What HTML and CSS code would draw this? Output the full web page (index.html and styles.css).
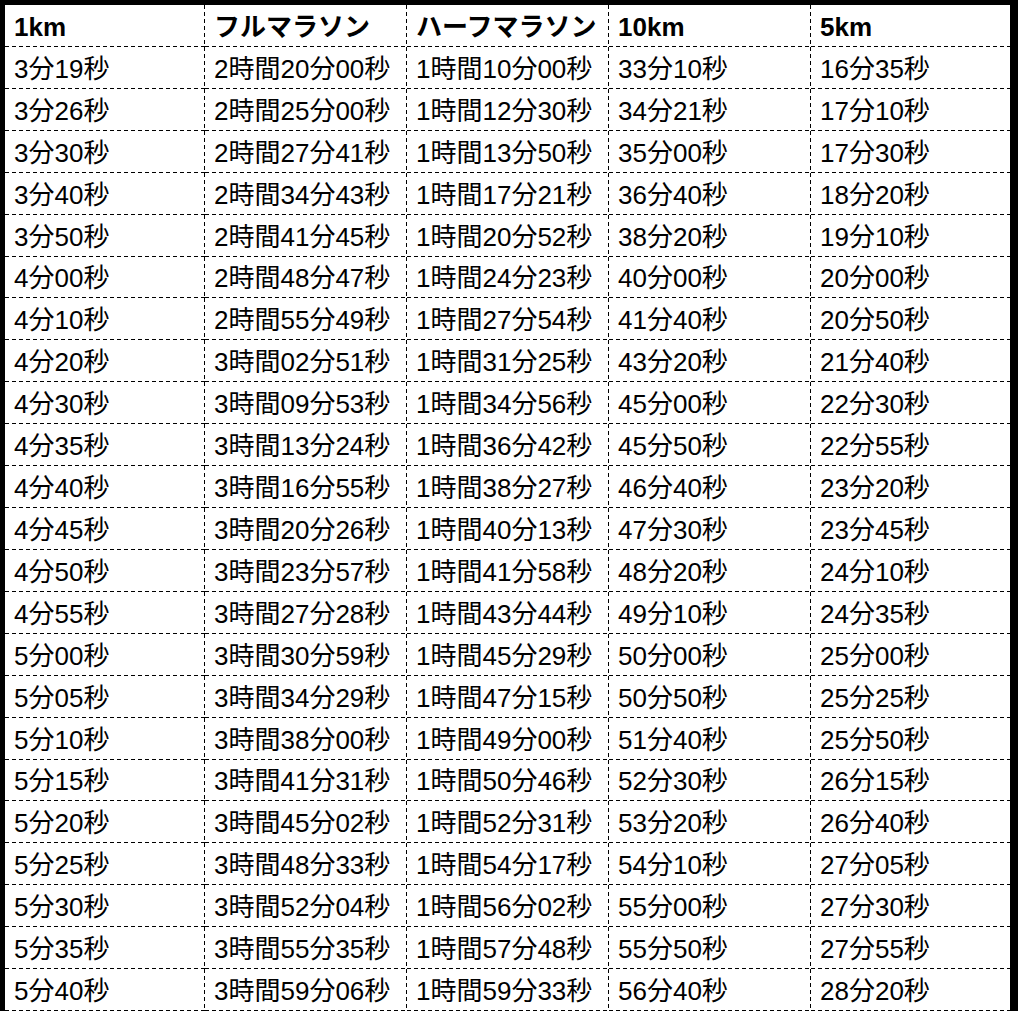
FILE: index.html
```html
<!DOCTYPE html>
<html lang="ja">
<head>
<meta charset="utf-8">
<title>ペース表</title>
<link rel="stylesheet" href="styles.css">
</head>
<body>
<div class="frame">
<div class="pace-table">
<div class="cell head">1km</div><div class="cell head">フルマラソン</div><div class="cell head">ハーフマラソン</div><div class="cell head">10km</div><div class="cell head last">5km</div>
<div class="cell">3分19秒</div><div class="cell">2時間20分00秒</div><div class="cell">1時間10分00秒</div><div class="cell">33分10秒</div><div class="cell last">16分35秒</div>
<div class="cell">3分26秒</div><div class="cell">2時間25分00秒</div><div class="cell">1時間12分30秒</div><div class="cell">34分21秒</div><div class="cell last">17分10秒</div>
<div class="cell">3分30秒</div><div class="cell">2時間27分41秒</div><div class="cell">1時間13分50秒</div><div class="cell">35分00秒</div><div class="cell last">17分30秒</div>
<div class="cell">3分40秒</div><div class="cell">2時間34分43秒</div><div class="cell">1時間17分21秒</div><div class="cell">36分40秒</div><div class="cell last">18分20秒</div>
<div class="cell">3分50秒</div><div class="cell">2時間41分45秒</div><div class="cell">1時間20分52秒</div><div class="cell">38分20秒</div><div class="cell last">19分10秒</div>
<div class="cell">4分00秒</div><div class="cell">2時間48分47秒</div><div class="cell">1時間24分23秒</div><div class="cell">40分00秒</div><div class="cell last">20分00秒</div>
<div class="cell">4分10秒</div><div class="cell">2時間55分49秒</div><div class="cell">1時間27分54秒</div><div class="cell">41分40秒</div><div class="cell last">20分50秒</div>
<div class="cell">4分20秒</div><div class="cell">3時間02分51秒</div><div class="cell">1時間31分25秒</div><div class="cell">43分20秒</div><div class="cell last">21分40秒</div>
<div class="cell">4分30秒</div><div class="cell">3時間09分53秒</div><div class="cell">1時間34分56秒</div><div class="cell">45分00秒</div><div class="cell last">22分30秒</div>
<div class="cell">4分35秒</div><div class="cell">3時間13分24秒</div><div class="cell">1時間36分42秒</div><div class="cell">45分50秒</div><div class="cell last">22分55秒</div>
<div class="cell">4分40秒</div><div class="cell">3時間16分55秒</div><div class="cell">1時間38分27秒</div><div class="cell">46分40秒</div><div class="cell last">23分20秒</div>
<div class="cell">4分45秒</div><div class="cell">3時間20分26秒</div><div class="cell">1時間40分13秒</div><div class="cell">47分30秒</div><div class="cell last">23分45秒</div>
<div class="cell">4分50秒</div><div class="cell">3時間23分57秒</div><div class="cell">1時間41分58秒</div><div class="cell">48分20秒</div><div class="cell last">24分10秒</div>
<div class="cell">4分55秒</div><div class="cell">3時間27分28秒</div><div class="cell">1時間43分44秒</div><div class="cell">49分10秒</div><div class="cell last">24分35秒</div>
<div class="cell">5分00秒</div><div class="cell">3時間30分59秒</div><div class="cell">1時間45分29秒</div><div class="cell">50分00秒</div><div class="cell last">25分00秒</div>
<div class="cell">5分05秒</div><div class="cell">3時間34分29秒</div><div class="cell">1時間47分15秒</div><div class="cell">50分50秒</div><div class="cell last">25分25秒</div>
<div class="cell">5分10秒</div><div class="cell">3時間38分00秒</div><div class="cell">1時間49分00秒</div><div class="cell">51分40秒</div><div class="cell last">25分50秒</div>
<div class="cell">5分15秒</div><div class="cell">3時間41分31秒</div><div class="cell">1時間50分46秒</div><div class="cell">52分30秒</div><div class="cell last">26分15秒</div>
<div class="cell">5分20秒</div><div class="cell">3時間45分02秒</div><div class="cell">1時間52分31秒</div><div class="cell">53分20秒</div><div class="cell last">26分40秒</div>
<div class="cell">5分25秒</div><div class="cell">3時間48分33秒</div><div class="cell">1時間54分17秒</div><div class="cell">54分10秒</div><div class="cell last">27分05秒</div>
<div class="cell">5分30秒</div><div class="cell">3時間52分04秒</div><div class="cell">1時間56分02秒</div><div class="cell">55分00秒</div><div class="cell last">27分30秒</div>
<div class="cell">5分35秒</div><div class="cell">3時間55分35秒</div><div class="cell">1時間57分48秒</div><div class="cell">55分50秒</div><div class="cell last">27分55秒</div>
<div class="cell">5分40秒</div><div class="cell">3時間59分06秒</div><div class="cell">1時間59分33秒</div><div class="cell">56分40秒</div><div class="cell last">28分20秒</div>
</div>
</div>
</body>
</html>
```
FILE: styles.css
```css
html, body {
  margin: 0;
  padding: 0;
  background: #ffffff;
}

body {
  font-family: "Liberation Sans", "Noto Sans CJK JP", sans-serif;
  color: #000000;
}

.frame {
  width: 1018px;
  box-sizing: border-box;
  border-top: 5px solid #000000;
  border-left: 5px solid #000000;
  border-right: 8px solid #000000;
}

.pace-table {
  display: grid;
  grid-template-columns: 200px 202px 202px 202px 1fr;
  grid-template-rows: repeat(24, 1fr);
  height: 1006px;
}

.cell {
  display: flex;
  align-items: center;
  padding: 2px 0 0 9px;
  font-size: 26px;
  line-height: 30px;
  white-space: nowrap;
  overflow: hidden;
  background-image:
    repeating-linear-gradient(to right, #000000 0 4px, transparent 4px 7px),
    repeating-linear-gradient(to bottom, #000000 0 4px, transparent 4px 7px);
  background-size: 100% 1px, 1px 100%;
  background-position: left bottom, right top;
  background-repeat: no-repeat;
}

.cell.last {
  background-image:
    repeating-linear-gradient(to right, #000000 0 4px, transparent 4px 7px);
  background-size: 100% 1px;
  background-position: left bottom;
}

.head {
  font-weight: bold;
}
```
